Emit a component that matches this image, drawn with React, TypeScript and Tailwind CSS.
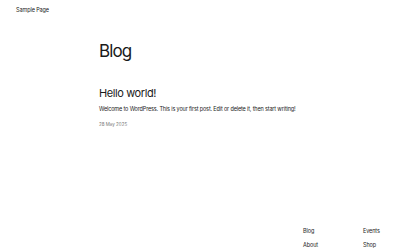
export default function App() {
  return (
    <div className="w-[400px] h-[250px] overflow-hidden bg-white text-[#1a1a1a] font-['Inter',sans-serif]">
      <header className="pl-4 pt-[6px] h-[30px] text-[5.5px] leading-[8px] tracking-[-0.1px]">
        <a className="block">Sample Page</a>
      </header>
      <main className="pl-[99px] pr-[40px]">
        <h1 className="text-[17px] leading-[20px] tracking-[-0.9px] mt-[11px]">Blog</h1>
        <h2 className="text-[11px] leading-[14px] tracking-[-0.4px] mt-[25px]">Hello world!</h2>
        <p className="text-[5.5px] leading-[8px] tracking-[-0.15px] mt-[5px]">
          Welcome to WordPress. This is your first post. Edit or delete it, then start writing!
        </p>
        <p className="text-[4.5px] leading-[6px] mt-[9px] text-[#777]">28 May 2025</p>
      </main>
      <footer className="mt-[99px] pl-[303px] grid grid-cols-[60px_1fr] gap-y-[6px] text-[5.5px] leading-[8px] tracking-[-0.1px]">
        <span>Blog</span>
        <span>Events</span>
        <span>About</span>
        <span>Shop</span>
      </footer>
    </div>
  );
}
